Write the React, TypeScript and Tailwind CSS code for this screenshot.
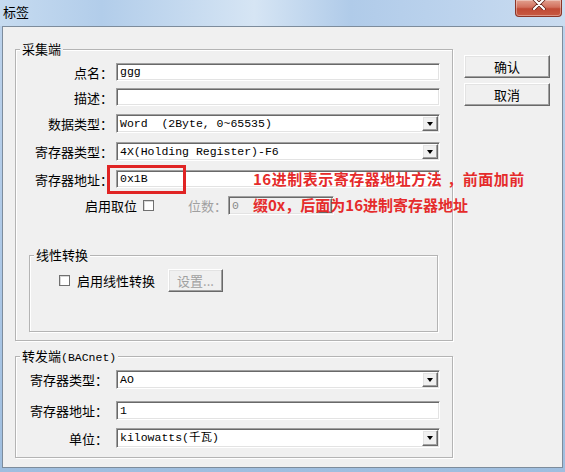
import React from 'react';

const sunken =
  'border border-t-[#a0a0a0] border-l-[#a0a0a0] border-r-white border-b-white shadow-[inset_1px_1px_0_#696969,inset_-1px_-1px_0_#e3e3e3]';
const raised =
  'border border-t-white border-l-white border-r-[#696969] border-b-[#696969] shadow-[inset_-1px_-1px_0_#a0a0a0,inset_1px_1px_0_#e3e3e3]';
const mono = "font-['Liberation_Mono','Noto_Sans_CJK_SC',monospace] text-[11.5px] whitespace-pre";

const TextField: React.FC<{ value?: string; className?: string }> = ({ value = '', className = '' }) => (
  <div className={`flex items-center bg-white pl-[3px] ${sunken} ${className}`}>
    <span className={`${mono} leading-none text-black`}>{value}</span>
  </div>
);

const SelectField: React.FC<{ value: string; className?: string }> = ({ value, className = '' }) => (
  <div className={`flex items-stretch bg-white p-[1px] pl-[3px] ${sunken} ${className}`}>
    <span className={`${mono} flex flex-1 items-center leading-none text-black`}>{value}</span>
    <div className={`flex w-[16px] items-center justify-center bg-[#f0f0f0] ${raised}`}>
      <div className="h-0 w-0 border-x-[3.5px] border-t-[4px] border-x-transparent border-t-black" />
    </div>
  </div>
);

const Check: React.FC<{ className?: string }> = ({ className = '' }) => (
  <div className={`h-[11px] w-[11px] border border-[#707070] bg-white shadow-[inset_1px_1px_0_#d8d8d8] ${className}`} />
);

const Legend: React.FC<{ children: React.ReactNode }> = ({ children }) => (
  <span className="absolute -top-[9px] left-[4px] bg-[#f0f0f0] px-[2px] text-[13px] leading-[16px] text-black">
    {children}
  </span>
);

const Row: React.FC<{ label: string; labelW: string; gap: string; className?: string; children: React.ReactNode }> = ({
  label,
  labelW,
  gap,
  className = '',
  children,
}) => (
  <div className={`flex items-center ${className}`}>
    <span className={`${labelW} ${gap} shrink-0 text-right text-[13px] leading-none text-black`}>{label}</span>
    {children}
  </div>
);

export default function App() {
  return (
    <div className="flex h-[472px] w-[565px] flex-col overflow-hidden bg-[linear-gradient(180deg,#bdd3ec_0%,#abc7e6_60%,#9fbedf_100%)] font-['Noto_Sans_CJK_SC','Noto_Sans',sans-serif]">
      {/* title bar */}
      <div className="flex h-[26px] shrink-0 items-start justify-between bg-[linear-gradient(90deg,#c6dbf0_0%,#b2cdea_18%,#c4d9ef_32%,#d6e5f4_45%,#b0cbe9_62%,#bcd3ed_80%,#cadcf0_100%)]">
        <span className="pl-[3px] pt-[4px] text-[13px] leading-[16px] text-black">标签</span>
        <div className="mr-[3px] flex h-[17px] w-[47px] justify-center rounded-b-[4px] border border-t-0 border-[#8c3527] bg-[linear-gradient(180deg,#e2a08f_0%,#d2705d_45%,#c04a35_55%,#c85a43_100%)] shadow-[inset_0_0_0_1px_rgba(255,255,255,0.35)]">
          <svg width="14" height="11" viewBox="0 0 14 11" className="mt-[-1px]">
            <path d="M2 0 L12 10 M12 0 L2 10" stroke="#5a1a10" strokeWidth="3.6" strokeLinecap="round" />
            <path d="M2 0 L12 10 M12 0 L2 10" stroke="#ffffff" strokeWidth="2.2" strokeLinecap="round" />
          </svg>
        </div>
      </div>

      {/* client area */}
      <div className="flex px-[2px]">
        <div className="relative flex h-[442px] w-[561px] border border-[#7d8c9c] bg-[#f0f0f0] pl-[12px] pt-[22px]">
          <div className="flex flex-col">
            {/* 采集端 */}
            <div className="relative flex h-[292px] w-[438px] flex-col border border-[#b4b4b4] pt-[13px] shadow-[inset_1px_1px_0_#ffffff,1px_1px_0_#ffffff]">
              <Legend>采集端</Legend>
              <Row label="点名：" labelW="w-[97px]" gap="mr-[3px]" className="h-[18px]">
                <TextField value="ggg" className="h-[18px] w-[324px]" />
              </Row>
              <Row label="描述：" labelW="w-[97px]" gap="mr-[3px]" className="mt-[7px] h-[18px]">
                <TextField className="h-[18px] w-[324px]" />
              </Row>
              <Row label="数据类型：" labelW="w-[97px]" gap="mr-[3px]" className="mt-[8px] h-[19px]">
                <SelectField value="Word  (2Byte, 0~65535)" className="h-[19px] w-[324px]" />
              </Row>
              <Row label="寄存器类型：" labelW="w-[97px]" gap="mr-[3px]" className="mt-[9px] h-[19px]">
                <SelectField value="4X(Holding Register)-F6" className="h-[19px] w-[324px]" />
              </Row>
              <Row label="寄存器地址：" labelW="w-[97px]" gap="mr-[3px]" className="mt-[9px] h-[18px]">
                <TextField value="0x1B" className="h-[18px] w-[324px]" />
              </Row>
              <div className="mt-[8px] flex h-[19px] items-center">
                <span className="w-[121px] text-right text-[13px] leading-none text-black">启用取位</span>
                <Check className="ml-[6px]" />
                <span className="ml-[34px] text-[13px] leading-none text-[#a0a0a0]">位数：</span>
                <div className={`ml-[1px] flex h-[19px] w-[106px] items-stretch bg-[#f0f0f0] pl-[3px] ${sunken}`}>
                  <span className={`${mono} flex flex-1 items-center leading-none text-[#8a8a8a]`}>0</span>
                  <div className={`m-[1px] w-[16px] ${raised}`} />
                </div>
              </div>

              {/* 线性转换 */}
              <div className="relative ml-[13px] mt-[40px] flex h-[77px] w-[409px] items-start border border-[#b4b4b4] pt-[13px] shadow-[inset_1px_1px_0_#ffffff,1px_1px_0_#ffffff]">
                <Legend>线性转换</Legend>
                <div className="flex h-[23px] items-center">
                  <Check className="ml-[29px]" />
                  <span className="ml-[7px] text-[13px] leading-none text-black">启用线性转换</span>
                  <div className={`ml-[13px] flex h-[23px] w-[55px] items-center justify-center bg-[#f0f0f0] text-[13px] leading-none text-[#a0a0a0] ${raised}`}>
                    设置...
                  </div>
                </div>
              </div>
            </div>

            {/* 转发端 */}
            <div className="relative mt-[15px] flex h-[102px] w-[438px] flex-col border border-[#b4b4b4] pt-[13px] shadow-[inset_1px_1px_0_#ffffff,1px_1px_0_#ffffff]">
              <Legend>
                转发端<span className={mono}>(BACnet)</span>
              </Legend>
              <Row label="寄存器类型：" labelW="w-[92px]" gap="mr-[8px]" className="h-[19px]">
                <SelectField value="AO" className="h-[19px] w-[324px]" />
              </Row>
              <Row label="寄存器地址：" labelW="w-[92px]" gap="mr-[8px]" className="mt-[12px] h-[19px]">
                <TextField value="1" className="h-[19px] w-[324px]" />
              </Row>
              <Row label="单位：" labelW="w-[92px]" gap="mr-[8px]" className="mt-[8px] h-[20px]">
                <SelectField value="kilowatts(千瓦)" className="h-[20px] w-[324px]" />
              </Row>
            </div>
          </div>

          {/* buttons */}
          <div className="ml-[11px] mt-[6px] flex flex-col gap-[5px]">
            <div className={`flex h-[23px] w-[86px] items-center justify-center bg-[#f0f0f0] text-[13px] leading-none text-black ${raised}`}>
              确认
            </div>
            <div className={`flex h-[23px] w-[86px] items-center justify-center bg-[#f0f0f0] text-[13px] leading-none text-black ${raised}`}>
              取消
            </div>
          </div>

          {/* annotation overlay */}
          <div className="absolute left-[104px] top-[138px] h-[29px] w-[79px] border-[3px] border-[#e02424]" />
          <div className="absolute left-[250px] top-[139px] whitespace-nowrap text-[15px] font-bold leading-[26px] text-[#e52b2b]">
            <div className="tracking-[0.5px]">
              16进制表示寄存器地址方法<span className="inline-block w-[5px]" />，前面加前
            </div>
            <div>缀0x，后面为16进制寄存器地址</div>
          </div>
        </div>
      </div>
    </div>
  );
}
